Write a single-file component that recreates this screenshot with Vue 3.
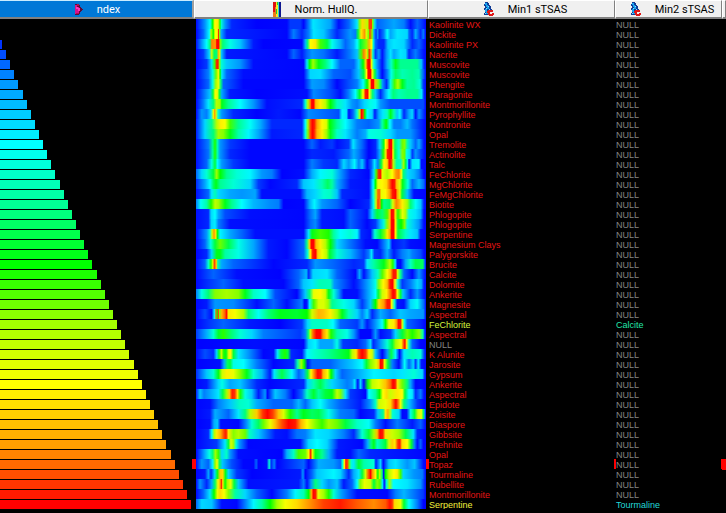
<script setup>
// Colour ramp shared by the index bars and the spectra: 0 = blue, 100 = red.
const ramp = [
  [0, 0, 0, 255],
  [12, 0, 150, 255],
  [25, 0, 255, 255],
  [38, 0, 255, 145],
  [50, 0, 255, 0],
  [62, 160, 255, 0],
  [75, 255, 255, 0],
  [87, 255, 165, 0],
  [100, 255, 0, 0],
]

function colour(value) {
  const v = Math.min(100, Math.max(0, value))
  const hi = Math.max(1, ramp.findIndex((k) => k[0] >= v))
  const a = ramp[hi - 1]
  const b = ramp[hi]
  const t = (v - a[0]) / (b[0] - a[0])
  const mix = [1, 2, 3].map((n) => Math.round(a[n] + (b[n] - a[n]) * t))
  return `rgb(${mix.join(',')})`
}

// Each spectrum is a list of channel:intensity pairs, channels 18 to 706.
const FIRST = 18
const LAST = 706

const samples = [
  ['Kaolinite WX', '18:2 45:12 60:25 68:50 74:75 84:78 90:50 93:30 105:12 125:5 200:1 290:2 300:6 330:6 340:2 355:10 368:22 420:14 445:3 475:8 490:15 500:22 508:60 515:80 532:65 536:95 543:95 546:60 553:20 560:8 580:10 610:14 640:10 660:3 680:8 698:5'],
  ['Dickite', '18:1 40:8 58:25 63:65 70:50 75:75 82:75 85:98 88:60 93:15 110:5 290:2 310:10 335:5 355:10 370:22 400:18 440:5 480:12 495:10 503:45 512:78 522:88 528:70 534:60 538:95 545:60 550:15 557:5 560:12 567:5 580:10 590:25 600:14 620:22 650:20 655:8 665:5 675:15 690:5 698:10'],
  ['Kaolinite PX', '18:3 35:12 50:25 60:40 65:90 76:88 80:100 86:100 90:60 98:40 120:28 150:18 190:4 220:1 335:2 345:15 352:40 360:75 375:78 390:55 410:45 425:27 450:15 465:8 490:15 500:25 510:45 528:60 536:85 544:75 548:30 555:8 565:5 580:5 592:18 610:22 640:20 665:5 685:8'],
  ['Nacrite', '18:2 40:6 58:20 65:68 72:42 80:40 85:85 89:70 94:18 110:4 290:2 310:8 335:4 350:8 365:12 400:9 440:4 480:10 500:18 512:55 520:90 528:80 532:60 536:98 542:85 547:30 555:6 565:12 575:3 588:12 600:22 610:14 630:22 645:20 655:5 675:10 698:4'],
  ['Muscovite', '18:1 50:6 65:22 74:55 80:98 84:98 88:60 94:30 110:18 150:12 190:3 340:2 350:22 358:50 368:62 385:48 405:40 425:25 450:8 490:8 505:20 518:50 526:80 532:100 538:100 543:72 550:28 560:12 575:3 590:15 602:32 615:48 630:38 650:38 680:38 692:18 700:5'],
  ['Muscovite', '18:1 55:10 68:28 78:58 85:76 90:50 95:22 110:8 160:3 340:2 360:20 390:21 430:8 480:7 505:18 520:45 528:75 533:100 540:100 545:75 553:45 560:15 575:2 590:10 602:28 615:42 635:34 665:38 685:34 698:8'],
  ['Phengite', '18:1 55:8 68:28 77:62 85:72 92:40 100:8 160:2 340:2 365:13 400:11 440:2 475:7 500:10 518:25 530:50 538:78 543:100 549:100 553:84 563:60 570:40 576:12 588:5 600:28 612:55 622:64 635:48 650:36 670:38 688:30 698:6'],
  ['Paragonite', '18:1 60:18 69:45 75:74 82:72 88:45 95:14 120:4 200:1 350:3 370:11 420:7 450:3 475:10 495:25 508:48 518:75 525:98 532:100 536:75 546:40 555:18 570:5 585:15 595:25 608:40 625:34 650:38 680:38 693:22 700:5'],
  ['Montmorillonite', '18:2 40:10 55:22 70:40 79:65 90:62 95:48 115:38 150:25 190:12 230:3 335:5 345:30 353:65 360:90 364:100 370:100 376:84 390:77 405:66 420:50 440:33 465:22 485:12 500:10 522:20 540:28 555:24 570:12 600:7 698:7'],
  ['Pyrophyllite', '18:2 35:12 50:10 63:22 70:72 74:88 78:70 84:30 95:12 130:5 200:1 265:4 330:2 355:11 410:8 445:7 455:24 468:22 475:3 488:8 500:30 508:65 513:100 518:95 523:50 530:25 545:20 553:4 565:15 577:22 590:32 600:48 610:35 620:18 628:25 640:5 655:14 665:20 675:3 685:12 698:6'],
  ['Nontronite', '18:4 45:20 65:38 80:65 92:77 105:74 120:55 145:38 180:26 210:15 245:5 335:5 345:25 353:62 360:94 366:100 372:98 380:87 395:76 408:70 418:50 440:37 465:25 500:10 535:8 565:12 575:35 587:50 598:25 610:10 630:10 650:17 665:9 698:4'],
  ['Opal', '18:4 45:20 70:40 85:62 100:60 120:48 145:35 175:24 205:14 245:4 335:5 345:28 353:60 360:94 366:100 371:98 380:85 395:77 408:63 420:48 440:32 465:22 500:10 525:15 535:28 570:30 600:20 620:12 660:12 698:4'],
  ['Tremolite', '18:3 55:10 68:38 75:52 82:34 90:12 120:6 180:2 340:2 365:8 390:4 425:6 440:3 475:6 488:22 500:13 515:8 535:1 555:5 568:20 580:48 585:75 591:85 596:100 603:100 607:70 613:42 625:30 635:58 642:60 650:35 660:18 675:8 685:15 700:3'],
  ['Actinolite', '18:3 55:9 68:36 75:52 82:34 90:12 120:5 180:2 340:2 365:5 430:4 475:8 490:15 505:10 535:1 555:5 568:15 578:52 586:78 591:98 603:100 607:75 613:45 625:28 635:60 642:58 648:28 658:20 665:6 675:12 700:4'],
  ['Talc', '18:3 50:8 65:28 75:45 82:25 95:12 130:6 180:2 340:2 365:10 400:6 440:5 460:20 475:12 492:24 505:10 515:18 530:1 543:8 552:22 562:10 572:45 580:76 590:80 596:100 602:98 608:65 618:35 630:32 639:62 645:45 651:22 655:3 665:22 685:24 692:3 700:3'],
  ['FeChlorite', '18:8 35:20 50:30 70:45 80:62 90:50 110:38 140:30 180:24 215:12 245:10 275:1 340:3 365:15 390:24 425:30 445:15 480:5 535:2 550:20 557:55 565:98 570:98 575:72 590:63 605:75 616:88 625:90 632:75 638:40 652:20 670:16 685:10 700:2'],
  ['MgChlorite', '18:5 45:14 60:25 70:42 78:48 90:38 130:30 180:20 205:6 240:2 320:5 340:18 370:22 395:34 412:42 425:36 440:15 480:4 535:3 548:25 555:50 562:72 575:76 588:80 597:92 605:100 612:98 618:84 628:70 636:48 652:28 665:8 685:16 700:8'],
  ['FeMgChlorite', '18:3 55:8 65:22 75:34 85:20 120:14 155:12 195:14 215:3 330:3 350:16 375:20 400:30 420:32 440:18 455:5 535:3 548:28 557:65 562:92 567:92 572:72 585:76 597:87 606:98 615:100 620:87 628:70 634:45 650:18 670:3 700:2'],
  ['Biotite', '18:10 32:26 50:35 63:52 75:66 85:62 105:48 125:38 155:25 190:16 240:11 265:10 280:1 340:2 358:15 372:24 395:12 440:8 480:1 535:5 549:28 557:68 562:95 568:90 573:50 580:38 597:42 607:70 617:90 624:87 635:77 650:63 660:40 675:26 690:18 700:4'],
  ['Phlogopite', '18:3 55:5 63:20 75:25 85:14 105:7 180:3 340:2 358:8 375:14 395:4 460:3 480:8 530:3 545:20 560:45 575:40 590:55 598:82 603:100 609:98 614:78 622:52 636:72 645:64 655:28 675:22 690:16 700:2'],
  ['Phlogopite', '18:3 55:5 64:20 75:23 85:10 120:3 340:2 360:8 375:11 395:4 460:3 480:8 530:2 555:6 568:15 580:30 590:60 598:83 603:100 609:100 615:77 622:45 632:50 642:60 650:30 670:18 685:12 700:2'],
  ['Serpentine', '18:2 50:12 60:30 66:68 72:88 77:78 82:50 90:24 120:14 155:8 195:3 340:3 355:22 365:48 390:55 415:52 430:36 450:25 480:30 500:24 512:5 540:3 553:30 570:45 583:60 590:78 598:87 603:100 609:100 615:76 622:45 645:32 660:22 680:18 690:4'],
  ['Magnesium Clays', '18:1 45:8 62:28 75:45 90:58 115:44 145:28 190:14 235:4 290:2 340:8 350:38 357:80 363:100 370:100 377:84 390:77 405:65 420:50 440:20 475:10 525:3 560:2 585:12 595:20 605:3 640:6 660:3 698:2'],
  ['Palygorskite', '18:1 50:5 65:20 80:48 90:48 105:36 145:28 190:14 235:4 290:2 340:8 352:30 360:75 367:98 376:100 382:82 395:73 408:66 418:46 440:30 480:16 520:6 535:10 543:22 552:6 570:5 590:15 610:4 635:10 655:14 665:10 690:7 700:3'],
  ['Brucite', '18:2 45:8 55:30 63:52 68:70 73:95 79:82 83:35 95:14 130:8 250:2 350:5 375:12 430:8 490:5 520:6 530:22 550:36 580:48 598:64 607:52 614:22 620:3 630:2 645:14 660:32 675:44 697:42 702:8'],
  ['Calcite', '18:2 70:8 140:3 270:1 325:8 348:16 355:5 368:20 410:22 440:8 495:2 507:14 520:3 545:18 562:32 575:56 590:74 600:84 608:98 616:98 621:70 630:38 640:8 665:2 685:12 698:6'],
  ['Dolomite', '18:2 60:6 100:8 160:3 280:2 325:8 340:18 365:22 390:34 420:33 432:12 490:3 500:5 535:15 555:28 565:60 578:76 590:84 598:98 606:100 613:76 622:30 635:6 660:10 680:20 692:15 700:4'],
  ['Ankerite', '18:10 35:28 55:40 75:60 110:63 145:60 165:48 190:32 225:25 255:7 320:1 345:18 358:40 370:72 390:76 405:68 415:48 430:30 445:12 460:3 500:3 530:12 555:25 563:45 575:68 588:77 600:92 607:100 614:98 620:76 630:45 637:18 660:5 680:12 700:4'],
  ['Magnesite', '18:2 50:4 75:12 130:11 200:3 250:8 290:3 335:10 343:1 350:4 358:25 370:55 385:70 400:70 413:62 425:38 460:28 490:20 515:6 540:18 555:50 565:80 580:88 590:98 598:98 603:76 612:30 620:4 640:3 660:20 680:26 700:8'],
  ['Aspectral', '18:1 45:7 65:3 73:25 78:92 81:50 85:95 88:60 95:85 104:92 110:100 114:78 135:74 160:64 175:40 205:26 235:40 270:48 320:46 350:50 365:68 385:85 400:83 420:77 440:62 455:48 475:33 500:20 515:10 530:20 545:5 570:15 600:8 630:18 660:14 698:12'],
  ['FeChlorite', '18:2 60:6 100:8 180:4 270:1 335:6 352:20 365:32 410:32 428:25 450:8 500:6 515:12 530:4 555:12 575:25 585:50 595:72 610:78 618:88 624:100 630:98 635:70 641:28 650:8 690:5', 'Calcite'],
  ['Aspectral', '18:6 50:15 70:30 85:46 100:53 125:40 150:30 185:20 220:10 330:6 345:10 354:40 360:68 368:92 378:100 390:100 398:88 410:78 422:52 440:35 470:28 490:12 510:2 540:2 555:12 570:3 600:6 615:20 635:45 650:58 665:52 685:60 697:35 702:6'],
  ['NULL', '18:1 80:2 190:3 340:2 355:20 375:24 390:14 425:14 440:28 458:6 500:5 525:8 540:20 548:5 570:12 590:30 605:45 615:62 632:74 638:92 643:100 648:78 655:30 665:8 690:2'],
  ['K Alunite', '18:2 45:7 70:5 80:20 87:48 94:68 101:52 108:48 116:72 122:76 130:45 145:22 175:12 220:2 250:3 262:22 272:44 284:52 293:45 303:5 335:3 350:24 370:30 415:38 450:44 475:48 485:65 497:78 505:95 515:100 526:95 535:77 545:68 555:18 575:1 590:12 602:44 615:24 627:2 640:22 665:34 690:30 701:6'],
  ['Jarosite', '18:1 90:3 102:14 112:42 120:45 130:28 160:25 200:10 250:2 310:5 322:35 333:62 342:50 352:3 365:8 420:8 450:12 485:18 515:25 528:45 540:60 557:70 565:84 570:100 576:98 582:72 592:45 605:10 625:2 635:12 642:26 655:8 668:20 675:6 683:22 692:4'],
  ['Gypsum', '18:5 50:18 70:30 85:48 96:68 110:77 130:72 150:60 170:48 190:30 215:16 240:4 252:22 275:44 305:24 325:8 340:14 352:44 362:76 372:90 382:100 392:98 398:85 412:74 422:50 435:20 455:8 500:14 550:24 610:20 635:22 670:30 695:20 702:5'],
  ['Ankerite', '18:2 50:4 85:20 96:28 120:14 150:18 200:5 240:2 340:5 352:20 370:34 390:44 405:35 425:20 470:10 485:12 493:22 502:3 510:20 520:2 532:48 545:66 565:72 585:83 600:92 607:100 614:98 621:78 635:58 650:40 660:14 675:2 690:3'],
  ['Aspectral', '18:4 30:18 42:10 60:14 85:22 98:44 110:62 118:82 126:98 134:96 142:80 150:52 165:28 185:18 205:4 225:12 232:2 255:18 285:10 310:1 335:8 350:32 370:46 385:36 405:45 425:48 440:66 450:60 465:22 480:6 525:2 535:25 555:36 567:50 577:75 588:80 600:68 620:78 635:75 643:45 655:25 665:22 675:5 690:10 700:3'],
  ['Epidote', '18:2 60:3 85:10 120:18 150:32 175:30 200:15 250:8 305:8 325:16 345:8 365:18 390:26 415:15 450:8 510:4 540:12 555:32 565:68 585:72 600:80 610:94 616:100 622:92 630:74 640:40 655:18 680:6 700:2'],
  ['Zoisite', '18:2 60:4 75:15 115:8 145:22 165:40 180:65 200:82 218:96 232:100 248:95 265:83 280:70 300:52 320:38 340:48 365:42 385:44 415:28 450:10 490:8 510:2 550:5 562:18 578:38 585:78 592:86 598:66 606:30 625:20 635:2 648:3 660:28 672:45 682:68 692:72 698:42 702:12'],
  ['Diaspore', '18:1 60:3 72:15 82:18 92:3 145:2 170:12 185:30 205:42 220:58 240:72 255:84 275:94 295:100 315:98 332:85 350:74 375:60 395:54 415:62 440:58 465:45 500:32 535:26 555:10 585:3 620:10 665:4 690:8'],
  ['Gibbsite', '18:1 55:5 65:26 73:65 80:78 92:86 102:95 108:98 115:78 130:60 145:64 165:58 178:32 205:18 255:4 290:3 320:9 345:10 375:22 415:20 460:10 490:5 515:30 535:45 550:62 560:84 568:100 577:98 584:80 605:68 625:62 645:44 668:22 680:5 698:3'],
  ['Prehnite', '18:2 80:6 105:22 115:45 122:70 130:62 138:30 148:12 175:2 330:3 355:20 380:25 410:20 445:4 515:2 532:15 542:40 550:48 560:32 572:38 585:45 595:68 605:82 613:78 622:96 628:98 634:80 650:75 662:46 672:10 680:3 690:8 698:2'],
  ['Opal', '18:1 45:15 58:28 68:40 76:62 85:54 95:20 110:32 120:12 145:3 275:1 290:15 310:32 325:55 345:58 355:76 361:98 366:72 375:48 395:38 415:15 440:4 480:3 505:8 540:5 600:4 698:2'],
  ['Topaz', '18:2 35:12 55:8 68:24 75:60 81:74 88:42 97:18 125:7 160:2 190:2 198:8 205:1 230:3 237:30 243:5 252:10 260:1 340:8 355:2 385:15 430:12 450:8 456:30 462:75 466:98 472:94 476:58 482:30 490:22 505:46 520:35 550:30 556:4 570:20 578:2 595:18 615:22 650:12 672:18 698:3', 'NULL', true],
  ['Tourmaline', '18:1 45:4 55:14 63:5 74:20 82:48 90:82 98:80 106:48 115:20 140:6 185:1 330:4 338:12 345:1 365:8 380:18 430:24 450:20 475:5 490:15 505:22 515:45 525:68 533:92 540:100 546:88 555:76 562:50 567:65 575:40 579:3 585:50 595:65 610:75 620:78 630:55 638:20 670:12 695:10'],
  ['Rubellite', '18:1 30:12 50:5 65:14 75:42 84:76 90:86 94:98 98:78 105:50 112:62 122:72 132:45 145:18 175:3 325:4 340:10 350:3 362:12 375:40 395:20 415:12 440:18 460:4 485:8 500:25 510:60 522:72 540:68 550:45 560:60 568:56 576:22 581:3 588:30 597:62 608:25 650:22 690:12'],
  ['Montmorillonite', '18:2 40:8 60:22 72:50 82:72 90:80 102:74 115:60 135:36 165:20 200:8 245:2 290:10 315:24 340:34 355:50 363:85 369:100 376:98 383:72 400:62 415:52 430:30 455:12 500:3 590:2 615:10 640:16 698:6'],
  ['Serpentine', '18:8 35:20 65:18 95:3 140:2 165:10 190:24 215:36 240:50 260:62 285:74 320:80 355:88 400:95 450:98 500:93 550:89 585:93 598:99 605:96 612:80 630:72 640:46 655:25 680:10 698:2', 'Tourmaline'],
]

// Weak signal is damped so that the background stays deep blue.
const damp = (value) => (value < 8 ? (value * value) / 8 : value)

function gradient(text) {
  const stops = text.split(' ').map((pair) => {
    const [channel, value] = pair.split(':').map(Number)
    const place = ((channel - FIRST) / (LAST - FIRST)) * 100
    return `${colour(damp(value))} ${place.toFixed(2)}%`
  })
  return `linear-gradient(90deg, ${stops.join(', ')}, ${colour(0)} 100%)`
}

const INDEX_MAX = 192
const rows = samples.map(([first, spectrum, second = 'NULL', selected = false], i) => ({
  first,
  second,
  selected,
  firstTone: first === 'NULL' ? 'none' : second === 'Calcite' ? 'lime' : second === 'Tourmaline' ? 'yellow' : 'red',
  secondTone: second === 'Calcite' ? 'mint' : second === 'Tourmaline' ? 'aqua' : 'none',
  bar: {
    width: `${(Math.max(0, Math.round((i - 1.5) * 4.11)) / INDEX_MAX) * 100}%`,
    background: colour((i / 48) * 100),
  },
  heat: { background: gradient(spectrum) },
}))
</script>

<template>
  <table class="log">
    <thead>
      <tr class="line head">
        <th class="active">
          <span class="title">
            <svg class="icon" width="8" height="13" viewBox="0 0 8 13" aria-hidden="true">
              <path d="M0 1h4v1h1v2h1v1h1v1h1v1H7v1H6v1H5v2H4v1H0z" fill="#5c0a38" />
              <path d="M0 2h2v2h2v1h1v3H4v2H2v1H0z" fill="#d8128c" />
              <path d="M1 4h2v1h2v3H3V6H1z" fill="#ff35bd" />
              <path d="M2 1h2v2H2zM1 10h3v1H1z" fill="#b00d50" />
            </svg>
            <span>ndex</span>
          </span>
        </th>
        <th>
          <span class="title shifted">
            <svg class="icon" width="8" height="15" viewBox="0 0 8 15" aria-hidden="true">
              <path d="M0 0h3v5H2v5H0z" fill="#e01010" />
              <path d="M0 10h2V5h1v10H0z" fill="#f07818" />
              <path d="M3 0h1v3h1v12H3z" fill="#f2ee20" />
              <path d="M4 0h1v3H4zM3 7h1v5H3z" fill="#28c828" />
              <path d="M5 0h1v15H5z" fill="#30d8d0" />
              <path d="M6 0h2v15H6z" fill="#101890" />
            </svg>
            <span>Norm. HullQ.</span>
          </span>
        </th>
        <th v-for="n in 2" :key="n">
          <span class="title shifted">
            <svg class="icon" width="10" height="14" viewBox="0 0 10 14" aria-hidden="true">
              <path d="M1 0h3v1h1v2h1v1h1v3h1v2H5v4H0v-2h1V8H0V6h1V4H0V2h1z" fill="#123c96" />
              <path d="M1 1h2v2h1v2h1v2H3V5H2V3H1zM1 7h2v2h1v3H2v-2H1z" fill="#18a4f0" />
              <path d="M4 4h1v1H4zM2 6h1v1H2zM5 7h1v1H5zM1 11h1v1H1z" fill="#7ce4ff" />
              <path d="M4 8h5v2H6v2h2v-1h2v2H9v1H5v-1H4v-2H3V9h1z" fill="#e01818" />
            </svg>
            <span>Min{{ n }} sTSAS</span>
          </span>
        </th>
        <th></th>
      </tr>
    </thead>
    <tbody>
      <tr v-for="(row, i) in rows" :key="i" class="line" :class="{ selected: row.selected }">
        <td class="index"><div class="bar" :style="row.bar"></div></td>
        <td class="spectrum"><div class="heat" :style="row.heat"></div></td>
        <td class="name" :class="row.firstTone">{{ row.first }}</td>
        <td class="name" :class="row.secondTone">{{ row.second }}</td>
        <td class="rest"></td>
      </tr>
    </tbody>
  </table>
</template>

<style>
body {
  margin: 0;
  background: #000;
}
</style>

<style scoped>
.log,
.log thead,
.log tbody {
  display: block;
}

.line {
  display: grid;
  grid-template-columns:
    minmax(0, 194fr) minmax(0, 234fr) minmax(0, 187fr)
    minmax(0, 107fr) minmax(0, 4fr);
  height: 10px;
}

.head {
  height: 19px;
}

th,
td {
  box-sizing: border-box;
  min-width: 0;
  padding: 0;
}

th {
  display: flex;
  align-items: center;
  justify-content: center;
  border-top: 1px solid #fff;
  border-left: 1px solid #fff;
  border-right: 1px solid #808080;
  border-bottom: 2px solid #808080;
  background: #f0f0f0;
  color: #000;
  font: 400 11px/15px Roboto, "Liberation Sans", sans-serif;
  white-space: nowrap;
}

th.active {
  border-top-color: #c8ecff;
  border-left: 0;
  border-right: 2px solid #a0a0a0;
  background: #0078d7;
  color: #fff;
}

.title {
  display: flex;
  align-items: center;
  gap: 14px;
  padding-left: 3px;
}

.shifted {
  padding-left: 8px;
}

.icon {
  flex: none;
}

.index {
  padding-top: 1px;
  border-right: 2px solid #000;
}

.bar {
  height: 9px;
}

.spectrum {
  border: 0 solid #000;
  border-width: 0 2px;
}

.heat {
  height: 10px;
}

.name {
  padding-top: 1px;
  border: 0 solid #000;
  border-width: 0 1px;
  font: 9px/10px "Liberation Sans", Arial, sans-serif;
  white-space: nowrap;
}

.selected td {
  border-color: #f00;
}

.selected .rest {
  background: #f00;
}

.red {
  color: #e41414;
}

.none {
  color: #848484;
}

.lime {
  color: #d4f53c;
}

.yellow {
  color: #f2f23c;
}

.mint {
  color: #22e6a8;
}

.aqua {
  color: #22d8d8;
}
</style>
